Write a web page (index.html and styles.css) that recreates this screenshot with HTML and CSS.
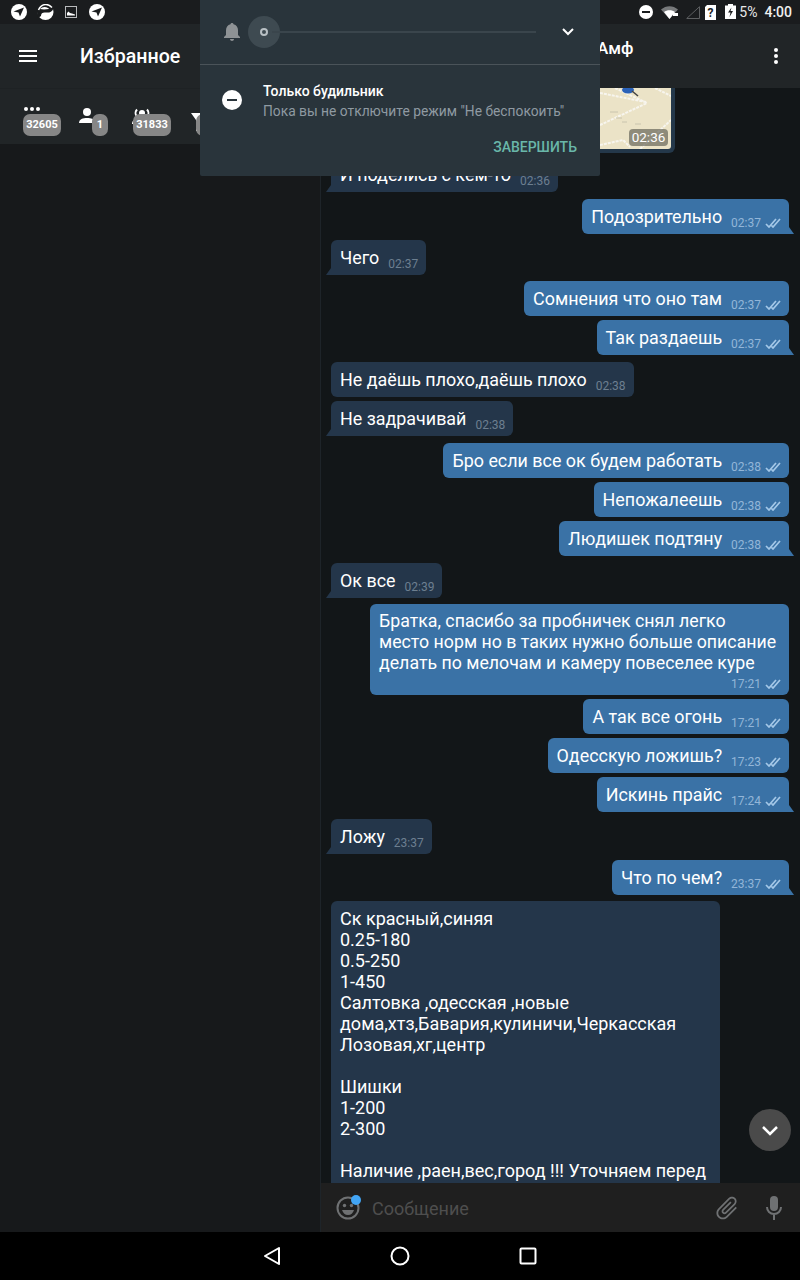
FILE: index.html
```html
<!DOCTYPE html>
<html lang="ru">
<head>
  <meta charset="UTF-8" />
  <title>Telegram</title>
  <link rel="stylesheet" href="styles.css">
</head>
<body>
  <!-- status bar -->
  <div class="status">
    <div class="status-left">
      <svg width="16" height="16" viewBox="0 0 16 16"><circle cx="8" cy="8" r="8" fill="#fff"/><path d="M2.500 7.500 13 3.500 9 12.500 7.500 8.500z" fill="#1a1c1e"/></svg>
      <svg class="swirl" width="17" height="16" viewBox="0 0 17 16"><circle cx="8.500" cy="8" r="8" fill="#fff"/><path d="M0 0h17v4C15 6 13 6 11 4 8 2 5 3 3 5L0 8zM16.500 4.500C15 8 12 9 9 8.500 6 8 4 9 4 12L1 14 0 8l3-3 4 .5z" fill="#1a1c1e"/><path d="M1.500 6C3 2.500 6 .5 9 .5c2 0 4 1 6 3" fill="none" stroke="#fff" stroke-width="1.500"/></svg>
      <svg width="12" height="12" viewBox="0 0 12 12"><rect x=".5" y=".5" width="11" height="11" fill="none" stroke="#b8babc"/><path d="M2 9.500V7l1.500-1.500L5 7l2 .5 3 1v1z" fill="#fff"/></svg>
      <svg width="16" height="16" viewBox="0 0 16 16"><circle cx="8" cy="8" r="8" fill="#fff"/><path d="M2.500 7.500 13 3.500 9 12.500 7.500 8.500z" fill="#1a1c1e"/></svg>
    </div>
    <div class="status-right">
      <svg class="st-dnd" width="14" height="14" viewBox="0 0 14 14"><circle cx="7" cy="7" r="7" fill="#fff"/><rect x="3" y="6" width="8" height="2" fill="#1a1c1e"/></svg>
      <svg class="st-wifi" width="17" height="13" viewBox="0 0 17 13"><path d="M0 3.500C5-1 12-1 17 3.500L8.500 13z" fill="#77797b"/><path d="M3 6c3-2.500 8-2.500 11 0L8.500 13z" fill="#fff"/><rect x="12" y="7" width="5" height="3" fill="#fff"/></svg>
      <svg class="st-signal" width="14" height="13" viewBox="0 0 14 13"><path d="M.7 12.500 13.500.7v11.800z" fill="none" stroke="#5d5f61"/></svg>
      <svg class="st-sim" width="11" height="15" viewBox="0 0 11 15"><path d="M0 2 2 0h9v15H0z" fill="#fff"/><text x="5.500" y="12" class="sim-mark">?</text></svg>
      <svg class="st-batt" width="11" height="15" viewBox="0 0 11 15"><path d="M3 0h5v1.500h3V15H0V1.500h3z" fill="#fff"/><path d="M6.500 3.500 3 8.500h2.500L4.500 13 8 7H5.500z" fill="#1a1c1e"/></svg>
      <span class="pct">5%</span>
      <span class="clock">4:00</span>
    </div>
  </div>

  <div class="app">
    <!-- left column -->
    <aside class="side">
      <div class="bar side-bar">
        <svg class="menu" width="18" height="12" viewBox="0 0 18 12"><path d="M0 1h18M0 6h18M0 11h18" stroke="#fff" stroke-width="2"/></svg>
        <span class="bar-title">Избранное</span>
      </div>
      <div class="tabs">
        <div class="tab tab-all">
          <svg width="18" height="6" viewBox="0 0 18 6"><circle cx="3" cy="3" r="2" fill="#fff"/><circle cx="9" cy="3" r="2" fill="#fff"/><circle cx="15" cy="3" r="2" fill="#fff"/></svg>
          <span class="count">32605</span>
        </div>
        <div class="tab tab-user">
          <svg width="18" height="18" viewBox="0 0 18 18"><circle cx="8" cy="5" r="4" fill="#fff"/><path d="M0 16c0-4 4-5 8-5s8 1 8 5z" fill="#fff"/></svg>
          <span class="count one">1</span>
        </div>
        <div class="tab tab-group">
          <svg width="20" height="18" viewBox="0 0 20 18"><circle cx="10" cy="5" r="3" fill="#fff"/><path d="M5 1.500a5 5 0 0 0 0 7M15 1.500a5 5 0 0 1 0 7" stroke="#fff" stroke-width="2" fill="none"/><path d="M0 16c0-3 2-5 5-5v5z" fill="#fff"/></svg>
          <span class="count">31833</span>
        </div>
        <div class="tab tab-chan">
          <svg width="14" height="18" viewBox="0 0 14 18"><path d="M0 0h14L9 7v11H5V7z" fill="#fff"/></svg>
          <span class="count one"></span>
        </div>
      </div>
    </aside>

    <!-- chat column -->
    <main class="chat">
      <div class="bar chat-bar">
        <span class="chat-title">Амф</span>
        <svg width="4" height="16" viewBox="0 0 4 16"><circle cx="2" cy="2" r="2" fill="#fff"/><circle cx="2" cy="8" r="2" fill="#fff"/><circle cx="2" cy="14" r="2" fill="#fff"/></svg>
      </div>

      <div class="messages">
        <div class="map-bubble">
          <div class="map">
            <!-- viewBox uses page coordinates -->
            <svg width="150" height="61" viewBox="521 88 150 61">
              <rect x="521" y="88" width="150" height="61" fill="#ebe3c7"/>
              <path d="M600 125 647 103M600 93 646 102M615 88 647 103M600 145 623 140 630 147M640 149 671 120M655 88 671 96" fill="none" stroke="#f7f5ee" stroke-width="2" stroke-dasharray="3 1"/>
              <path d="M610 112h8M616 118h6M622 122h5M635 124h6" stroke="#c9c4ae" stroke-width="1"/>
              <ellipse cx="628" cy="90" rx="6" ry="3.500" fill="#2b62b8"/>
              <path d="M632 91 638 96" stroke="#444" stroke-width="1.500"/>
            </svg>
            <span class="map-time">02:36</span>
          </div>
        </div>
        <div class="msg in tail"><span class="text">И поделись с кем-то</span><span class="time">02:36</span></div>
        <div class="msg out tail gap7"><span class="text">Подозрительно</span><span class="time">02:37</span><svg class="ticks" viewBox="0 0 16 10"><path d="M1 6l3 3 7-8M6.500 7.500 8 9l7-8"/></svg></div>
        <div class="msg in tail first"><span class="text">Чего</span><span class="time">02:37</span></div>
        <div class="msg out first"><span class="text">Сомнения что оно там</span><span class="time">02:37</span><svg class="ticks" viewBox="0 0 16 10"><path d="M1 6l3 3 7-8M6.500 7.500 8 9l7-8"/></svg></div>
        <div class="msg out tail"><span class="text">Так раздаешь</span><span class="time">02:37</span><svg class="ticks" viewBox="0 0 16 10"><path d="M1 6l3 3 7-8M6.500 7.500 8 9l7-8"/></svg></div>
        <div class="msg in gap7"><span class="text">Не даёшь плохо,даёшь плохо</span><span class="time">02:38</span></div>
        <div class="msg in tail"><span class="text">Не задрачивай</span><span class="time">02:38</span></div>
        <div class="msg out gap7"><span class="text">Бро если все ок будем работать</span><span class="time">02:38</span><svg class="ticks" viewBox="0 0 16 10"><path d="M1 6l3 3 7-8M6.500 7.500 8 9l7-8"/></svg></div>
        <div class="msg out"><span class="text">Непожалеешь</span><span class="time">02:38</span><svg class="ticks" viewBox="0 0 16 10"><path d="M1 6l3 3 7-8M6.500 7.500 8 9l7-8"/></svg></div>
        <div class="msg out tail"><span class="text">Людишек подтяну</span><span class="time">02:38</span><svg class="ticks" viewBox="0 0 16 10"><path d="M1 6l3 3 7-8M6.500 7.500 8 9l7-8"/></svg></div>
        <div class="msg in tail gap7"><span class="text">Ок все</span><span class="time">02:39</span></div>
        <div class="msg out first long thanks">
          <div class="text">Братка, спасибо за пробничек снял легко<br>место норм но в таких нужно больше описание<br>делать по мелочам и камеру повеселее куре</div>
          <div class="meta"><span class="time">17:21</span><svg class="ticks" viewBox="0 0 16 10"><path d="M1 6l3 3 7-8M6.500 7.500 8 9l7-8"/></svg></div>
        </div>
        <div class="msg out"><span class="text">А так все огонь</span><span class="time">17:21</span><svg class="ticks" viewBox="0 0 16 10"><path d="M1 6l3 3 7-8M6.500 7.500 8 9l7-8"/></svg></div>
        <div class="msg out"><span class="text">Одесскую ложишь?</span><span class="time">17:23</span><svg class="ticks" viewBox="0 0 16 10"><path d="M1 6l3 3 7-8M6.500 7.500 8 9l7-8"/></svg></div>
        <div class="msg out tail"><span class="text">Искинь прайс</span><span class="time">17:24</span><svg class="ticks" viewBox="0 0 16 10"><path d="M1 6l3 3 7-8M6.500 7.500 8 9l7-8"/></svg></div>
        <div class="msg in tail gap7"><span class="text">Ложу</span><span class="time">23:37</span></div>
        <div class="msg out tail first"><span class="text">Что по чем?</span><span class="time">23:37</span><svg class="ticks" viewBox="0 0 16 10"><path d="M1 6l3 3 7-8M6.500 7.500 8 9l7-8"/></svg></div>
        <div class="msg in first long price">
          <div class="text">Ск красный,синяя<br>0.25-180<br>0.5-250<br>1-450<br>Салтовка ,одесская ,новые<br>дома,хтз,Бавария,кулиничи,Черкасская<br>Лозовая,хг,центр<br><br>Шишки<br>1-200<br>2-300<br><br>Наличие ,раен,вес,город !!! Уточняем перед</div>
        </div>
      </div>

      <div class="down">
        <svg width="18" height="11" viewBox="0 0 18 11"><path d="M2 2l7 7 7-7" fill="none" stroke="#fff" stroke-width="2.500"/></svg>
      </div>

      <div class="input-bar">
        <div class="emoji">
          <svg width="24" height="24" viewBox="0 0 24 24"><circle cx="12" cy="12" r="10.500" fill="none" stroke="#6f7173" stroke-width="2"/><circle cx="8.500" cy="9.500" r="1.700" fill="#6f7173"/><circle cx="15.500" cy="9.500" r="1.700" fill="#6f7173"/><path d="M6 14h12c-1 3-3 5-6 5s-5-2-6-5z" fill="#6f7173"/></svg>
          <span class="dot"></span>
        </div>
        <span class="placeholder">Сообщение</span>
        <svg class="clip" width="28" height="28" viewBox="0 0 24 24"><path transform="rotate(45 12 12)" d="M16.500 6v11.500c0 2.210-1.790 4-4 4s-4-1.790-4-4V5c0-1.380 1.120-2.500 2.500-2.500s2.500 1.120 2.500 2.500v10.500c0 .55-.45 1-1 1s-1-.45-1-1V6H10v9.500c0 1.380 1.120 2.500 2.500 2.500s2.500-1.120 2.500-2.500V5c0-2.210-1.790-4-4-4S7 2.790 7 5v12.500c0 3.040 2.460 5.500 5.500 5.500s5.500-2.460 5.500-5.500V6h-1.500z" fill="#6f7173"/></svg>
        <svg class="mic" width="16" height="24" viewBox="0 0 16 24"><rect x="4" y="0" width="8" height="15" rx="4" fill="#6f7173"/><path d="M1 11c0 4 3 7 7 7s7-3 7-7M8 18v6" fill="none" stroke="#6f7173" stroke-width="2"/></svg>
      </div>
    </main>
  </div>

  <!-- android nav -->
  <div class="nav">
    <svg width="18" height="20" viewBox="0 0 18 20"><path d="M16 2 2 10l14 8z" fill="none" stroke="#fff" stroke-width="2" stroke-linejoin="round"/></svg>
    <svg width="20" height="20" viewBox="0 0 20 20"><circle cx="10" cy="10" r="8.500" fill="none" stroke="#fff" stroke-width="2"/></svg>
    <svg width="18" height="18" viewBox="0 0 18 18"><rect x="1.500" y="1.500" width="15" height="15" rx="1" fill="none" stroke="#fff" stroke-width="2"/></svg>
  </div>

  <!-- do not disturb panel -->
  <div class="dnd">
    <div class="dnd-top">
      <svg width="20" height="20" viewBox="0 0 20 20"><path d="M10 1c1 0 1.500.6 1.500 1.300 3 .7 4.500 3.200 4.500 6V13l2 2v1H2v-1l2-2V8.300c0-2.800 1.500-5.300 4.500-6C8.500 1.600 9 1 10 1zM8 17h4c0 1-1 2-2 2s-2-1-2-2z" fill="#8e9295"/></svg>
      <div class="slider">
        <span class="thumb"><i></i></span>
        <span class="track"></span>
      </div>
      <svg class="chev" width="12" height="8" viewBox="0 0 12 8"><path d="M1 1l5 5 5-5" fill="none" stroke="#fff" stroke-width="2"/></svg>
    </div>
    <div class="dnd-body">
      <svg class="dnd-icon" width="20" height="20" viewBox="0 0 20 20"><circle cx="10" cy="10" r="10" fill="#fff"/><rect x="5" y="9" width="10" height="2" fill="#29343b"/></svg>
      <div>
        <div class="dnd-title">Только будильник</div>
        <div class="dnd-sub">Пока вы не отключите режим "Не беспокоить"</div>
      </div>
    </div>
    <div class="dnd-end">ЗАВЕРШИТЬ</div>
  </div>
</body>
</html>
```

FILE: styles.css
```css
* {
  box-sizing: border-box;
  margin: 0;
  padding: 0;
}

body {
  width: 800px;
  height: 1280px;
  overflow: hidden;
  background: #000;
  font-family: Roboto, sans-serif;
  color: #fff;
  display: flex;
  flex-direction: column;
  position: relative;
}

.status {
  height: 24px;
  background: #1a1c1e;
  display: flex;
  justify-content: space-between;
  align-items: center;
  padding: 0 8px 0 11px;
  flex: none;
}

.status-left,
.status-right {
  display: flex;
  align-items: center;
}

.status-left {
  gap: 10px;
}

.status-left svg:nth-child(3) {
  margin: 0 2px 0 1px;
}

.status-right {
  font-size: 14px;
  font-weight: 500;
}

.st-wifi,
.st-signal {
  margin-left: 8px;
}

.st-sim {
  margin-left: 5px;
}

.st-batt {
  margin-left: 9px;
  margin-top: -2px;
}

.sim-mark {
  font-family: Roboto, sans-serif;
  font-size: 12px;
  font-weight: 700;
  fill: #1a1c1e;
  text-anchor: middle;
}

.pct {
  color: #e8e8e8;
  font-weight: 400;
  margin-left: 3px;
}

.clock {
  color: #f0f0f0;
  margin-left: 7px;
}

.app {
  flex: 1;
  display: flex;
  min-height: 0;
}

.side {
  width: 321px;
  background: #17191b;
  border-right: 1px solid #1e2429;
  flex: none;
}

.bar {
  height: 64px;
  background: #212527;
  display: flex;
  align-items: center;
}

.side-bar {
  padding-left: 19px;
}

.bar-title {
  font-size: 19.6px;
  font-weight: 500;
  margin-left: 43px;
}

.tabs {
  height: 56px;
  background: #212527;
  border-top: 1px solid #1e2224;
  display: flex;
}

.tab {
  position: relative;
  width: 54px;
  padding: 17px 0 0 23px;
}

.tab svg {
  display: block;
}

.count {
  position: absolute;
  top: 25px;
  left: 23px;
  width: 38px;
  height: 22px;
  border-radius: 7px;
  background: #868686;
  font-size: 11px;
  font-weight: 700;
  line-height: 22px;
  text-align: center;
}

.count.one {
  width: 16px;
}

.tab-user {
  width: 53px;
  padding: 18px 0 0 25px;
}

.tab-user .count {
  left: 38px;
}

.tab-group {
  padding: 19px 0 0 25px;
}

.tab-group .count {
  left: 26px;
}

.tab-chan {
  padding: 24px 0 0 30px;
}

.tab-chan .count {
  left: 35px;
}

.chat {
  flex: 1;
  min-width: 0;
  background: #121618;
  display: flex;
  flex-direction: column;
  position: relative;
}

.chat-bar {
  justify-content: space-between;
  padding: 0 22px 0 276px;
  position: relative;
  z-index: 1;
}

.chat-title {
  font-size: 17px;
  font-weight: 500;
  margin-top: -16px;
}

.messages {
  flex: 1;
  min-height: 0;
  overflow: hidden;
  display: flex;
  flex-direction: column;
  padding: 0 11px 0 10px;
}

.map-bubble {
  align-self: flex-end;
  margin-right: 114px;
  padding: 0 4px 4px 0;
  background: #24384a;
  border-radius: 0 0 6px 6px;
  flex: none;
}

.map {
  position: relative;
  height: 61px;
  width: 150px;
  overflow: hidden;
  border-radius: 0 0 3px 3px;
}

.map svg {
  display: block;
}

.map-time {
  position: absolute;
  right: 3px;
  bottom: 3px;
  height: 17px;
  width: 39px;
  border-radius: 4px;
  background: rgba(80, 80, 70, 0.6);
  font-size: 13.5px;
  line-height: 17px;
  text-align: center;
}

.msg {
  flex: none;
  display: flex;
  align-items: flex-start;
  height: 35px;
  padding: 7px 8px 0 9px;
  margin-top: 4px;
  border-radius: 6px;
  font-size: 17.9px;
  line-height: 21px;
  position: relative;
}

.msg.first {
  margin-top: 6px;
}

.msg.gap7 {
  margin-top: 7px;
}

.msg.in {
  align-self: flex-start;
  background: #24364a;
}

.msg.out {
  align-self: flex-end;
  background: #3a72a6;
}

.msg.in.tail {
  border-bottom-left-radius: 0;
}

.msg.out.tail {
  border-bottom-right-radius: 0;
}

.msg.tail::after {
  content: "";
  position: absolute;
  bottom: 0;
  width: 0;
  height: 0;
  border-bottom: 7px solid #24364a;
}

.msg.in.tail::after {
  left: -5px;
  border-left: 5px solid transparent;
}

.msg.out.tail::after {
  right: -5px;
  border-bottom-color: #3a72a6;
  border-right: 5px solid transparent;
}

.time {
  font-size: 12px;
  line-height: 14px;
  margin-left: 9px;
  color: #6d7f90;
  align-self: flex-end;
  margin-bottom: 4px;
}

.out .time {
  color: #93b6d8;
}

.ticks {
  width: 16px;
  height: 10px;
  margin: 0 0 6px 4px;
  align-self: flex-end;
}

.ticks path {
  fill: none;
  stroke: #a4c8e8;
  stroke-width: 1.7;
}

.msg.long {
  display: block;
  height: auto;
  white-space: nowrap;
}

.meta {
  display: flex;
  justify-content: flex-end;
  height: 21px;
}

.msg.thanks {
  width: 419px;
  font-size: 17.75px;
}

.msg.price {
  width: 389px;
  padding-bottom: 30px;
  font-size: 18px;
}

.down {
  position: absolute;
  right: 9px;
  top: 1085px;
  width: 42px;
  height: 42px;
  border-radius: 50%;
  background: #4a4a4a;
  display: flex;
  align-items: center;
  justify-content: center;
}

.input-bar {
  height: 49px;
  flex: none;
  background: #1f1f1f;
  display: flex;
  align-items: center;
  padding: 0 18px 0 15px;
  position: relative;
}

.emoji {
  position: relative;
  width: 24px;
  height: 24px;
}

.dot {
  position: absolute;
  top: -1px;
  left: 15px;
  width: 10px;
  height: 10px;
  border-radius: 50%;
  background: #42a5f5;
}

.placeholder {
  flex: 1;
  margin: 2px 0 0 12px;
  font-size: 18px;
  color: #4e4e4e;
}

.clip {
  margin-right: 25px;
}

.nav {
  height: 48px;
  flex: none;
  background: #000;
  display: flex;
  align-items: center;
  padding-left: 263px;
  gap: 109px;
}

.dnd {
  position: absolute;
  left: 200px;
  top: 0;
  width: 400px;
  height: 176px;
  background: #29343b;
  border-radius: 0 0 2px 2px;
  z-index: 5;
}

.dnd-top {
  height: 65px;
  border-bottom: 1px solid #4a5359;
  display: flex;
  align-items: center;
  padding: 0 26px 0 22px;
}

.slider {
  flex: 1;
  display: flex;
  align-items: center;
  margin: 0 26px 0 6px;
  position: relative;
}

.thumb {
  width: 32px;
  height: 32px;
  border-radius: 50%;
  background: #3e4a51;
  display: flex;
  align-items: center;
  justify-content: center;
  flex: none;
}

.thumb i {
  width: 8px;
  height: 8px;
  border: 2px solid #b9c0c4;
  border-radius: 50%;
}

.track {
  flex: 1;
  height: 2px;
  background: #3a454c;
  margin-left: -8px;
}

.dnd-body {
  display: flex;
  gap: 21px;
  padding: 17px 22px 0;
  align-items: flex-start;
}

.dnd-icon {
  margin-top: 8px;
  flex: none;
}

.dnd-title {
  font-size: 14px;
  font-weight: 500;
  line-height: 18px;
}

.dnd-sub {
  font-size: 13.8px;
  line-height: 22px;
  color: #8f9aa2;
}

.dnd-end {
  position: absolute;
  right: 23px;
  bottom: 21px;
  font-size: 14px;
  font-weight: 500;
  color: #69b7a9;
}
```
